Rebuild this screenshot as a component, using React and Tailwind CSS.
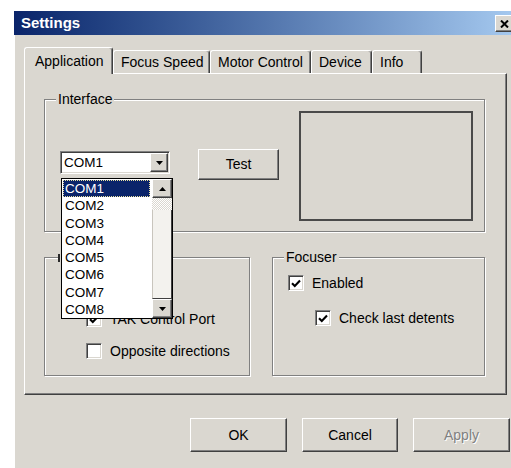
import React from "react";

const FACE = "bg-[#dad7d0]";

function Raised({ className = "", children }) {
  return (
    <div
      className={`${FACE} border border-t-white border-l-white border-r-[#404040] border-b-[#404040] shadow-[inset_-1px_-1px_0_#808080] flex items-center justify-center ${className}`}
    >
      {children}
    </div>
  );
}

function CheckBox({ checked }) {
  return (
    <span className="w-[16px] h-[16px] shrink-0 bg-white border border-t-[#808080] border-l-[#808080] border-r-white border-b-white shadow-[inset_1px_1px_0_#404040,inset_-1px_-1px_0_#dad7d0] flex items-center justify-center">
      {checked && (
        <svg width="10" height="9" viewBox="0 0 10 9">
          <path d="M1 4.2 L3.8 7 L9 1.6" stroke="#000" strokeWidth="2.1" fill="none" />
        </svg>
      )}
    </span>
  );
}

function Option({ checked, label, className = "" }) {
  return (
    <div className={`flex items-center gap-[8px] h-[16px] ${className}`}>
      <CheckBox checked={checked} />
      <span className="leading-[17px] whitespace-nowrap">{label}</span>
    </div>
  );
}

function Group({ label, className = "", children }) {
  return (
    <div
      className={`relative border border-[#808080] shadow-[inset_1px_1px_0_#ffffff,1px_1px_0_#ffffff] ${className}`}
    >
      {label ? (
        <span className={`absolute left-[11px] -top-[9px] px-[2px] ${FACE} leading-[17px] whitespace-nowrap`}>
          {label}
        </span>
      ) : (
        // caption is covered by the open port list; only its first stroke shows
        <span className={`absolute left-[11px] -top-[4px] w-[10px] h-[8px] ${FACE} border-l-2 border-[#2a2a2a] ml-[2px]`} />
      )}
      {children}
    </div>
  );
}

function Arrow({ up }) {
  return (
    <svg width="7" height="4" viewBox="0 0 7 4">
      {up ? <polygon points="0,4 7,4 3.5,0" fill="#000" /> : <polygon points="0,0 7,0 3.5,4" fill="#000" />}
    </svg>
  );
}

const ports = ["COM1", "COM2", "COM3", "COM4", "COM5", "COM6", "COM7", "COM8"];

function PortList() {
  return (
    <div className="absolute left-0 top-[26px] z-20 w-[112px] h-[141px] bg-white border border-black flex">
      <div className="w-[88px] pt-[1px] pl-[1px]">
        {ports.map((p, i) => (
          <div
            key={p}
            className={
              i === 0
                ? "h-[17.3px] leading-[15px] pl-[1px] bg-[#0a246a] text-white border border-dotted border-[#e8e0a0] text-[13.5px]"
                : "h-[17.3px] leading-[17px] pl-[2px] text-black text-[13.5px]"
            }
          >
            {p}
          </div>
        ))}
      </div>
      <div className="ml-auto w-[20px] flex flex-col">
        <Raised className="h-[19px] w-[20px]">
          <Arrow up />
        </Raised>
        <div className="h-[12px] bg-[repeating-conic-gradient(#dad7d0_0_25%,#ffffff_0_50%)] bg-[length:2px_2px]" />
        <div className="flex-1 bg-[#f3f2ee] border-l border-l-[#c8c5bd] border-r border-r-[#404040] border-b border-b-[#404040]" />
        <Raised className="h-[19px] w-[20px]">
          <Arrow />
        </Raised>
      </div>
    </div>
  );
}

function Tab({ label, width, selected }) {
  return (
    <div
      style={{ width }}
      className={
        selected
          ? `relative z-10 h-[27px] -mb-px ${FACE} border-l border-t border-white border-r border-r-[#404040] shadow-[inset_-1px_0_0_#808080] rounded-t-[3px] pl-[10px] pt-[5px] leading-[17px] whitespace-nowrap`
          : `h-[23px] ${FACE} border-l border-t border-white border-r border-r-[#404040] shadow-[inset_-1px_0_0_#808080] rounded-t-[3px] pl-[7px] pt-[3px] leading-[17px] whitespace-nowrap`
      }
    >
      {label}
    </div>
  );
}

export default function App() {
  return (
    <div className="w-[511px] h-[468px] bg-white overflow-hidden pl-[14px] pt-[11px] font-['Liberation_Sans',Arial,sans-serif] text-[14px] text-black">
      <div className={`w-[503px] h-[457px] ${FACE} shadow-[inset_1px_0_0_#ffffff] flex flex-col`}>
        {/* title bar */}
        <div className="h-[24px] shrink-0 bg-gradient-to-r from-[#0a246a] to-[#a6caf0] flex items-center justify-between pl-[7px] pr-[3px]">
          <span className="text-white font-bold text-[15px] leading-[18px]">Settings</span>
          <Raised className="w-[19px] h-[17px] mt-[1px]">
            <svg width="9" height="8" viewBox="0 0 9 8">
              <path d="M1 0.5 L8 7.5 M8 0.5 L1 7.5" stroke="#000" strokeWidth="2" />
            </svg>
          </Raised>
        </div>

        {/* tab strip */}
        <div className="mt-[12px] ml-[10px] h-[26px] flex items-end">
          <Tab label="Application" width={89} selected />
          <Tab label="Focus Speed" width={97} />
          <Tab label="Motor Control" width={101} />
          <Tab label="Device" width={61} />
          <Tab label="Info" width={50} />
        </div>

        {/* tab page */}
        <div className="ml-[10px] w-[483px] h-[322px] shrink-0 border border-t-white border-l-white border-r-[#404040] border-b-[#404040] shadow-[inset_-1px_-1px_0_#808080] pl-[19px] pt-[25px]">
          <Group label="Interface" className="w-[441px] h-[133px] flex items-start pl-[15px]">
            <div className="relative mt-[51px] w-[110px] h-[23px] bg-white border border-t-[#808080] border-l-[#808080] border-r-white border-b-white shadow-[inset_1px_1px_0_#404040,inset_-1px_-1px_0_#dad7d0] flex items-center pl-[3px] pr-[1px]">
              <span className="text-[13.5px] leading-[17px]">COM1</span>
              <Raised className="ml-auto w-[18px] h-[19px]">
                <Arrow />
              </Raised>
              <PortList />
            </div>
            <Raised className="ml-[28px] mt-[49px] w-[81px] h-[31px]">
              <span className="leading-[17px]">Test</span>
            </Raised>
            <div className="ml-[20px] mt-[11px] w-[174px] h-[110px] border-2 border-[#4a4a4a]" />
          </Group>

          <div className="mt-[25px] flex gap-[22px]">
            <Group className="w-[206px] h-[119px] pl-[41px] pt-[53px] flex flex-col gap-[16px]">
              <Option checked label="TAK Control Port" />
              <Option label="Opposite directions" />
            </Group>
            <Group label="Focuser" className="w-[213px] h-[119px] pl-[15px] pt-[17px] flex flex-col gap-[19px]">
              <Option checked label="Enabled" />
              <Option checked label="Check last detents" className="ml-[27px]" />
            </Group>
          </div>
        </div>

        {/* dialog buttons */}
        <div className="mt-[23px] pl-[176px] flex gap-[15px]">
          <Raised className="w-[97px] h-[34px]">
            <span className="leading-[17px]">OK</span>
          </Raised>
          <Raised className="w-[96px] h-[34px]">
            <span className="leading-[17px]">Cancel</span>
          </Raised>
          <Raised className="w-[97px] h-[34px]">
            <span className="leading-[17px] text-[#808080] [text-shadow:1px_1px_0_#ffffff]">Apply</span>
          </Raised>
        </div>
      </div>
    </div>
  );
}
